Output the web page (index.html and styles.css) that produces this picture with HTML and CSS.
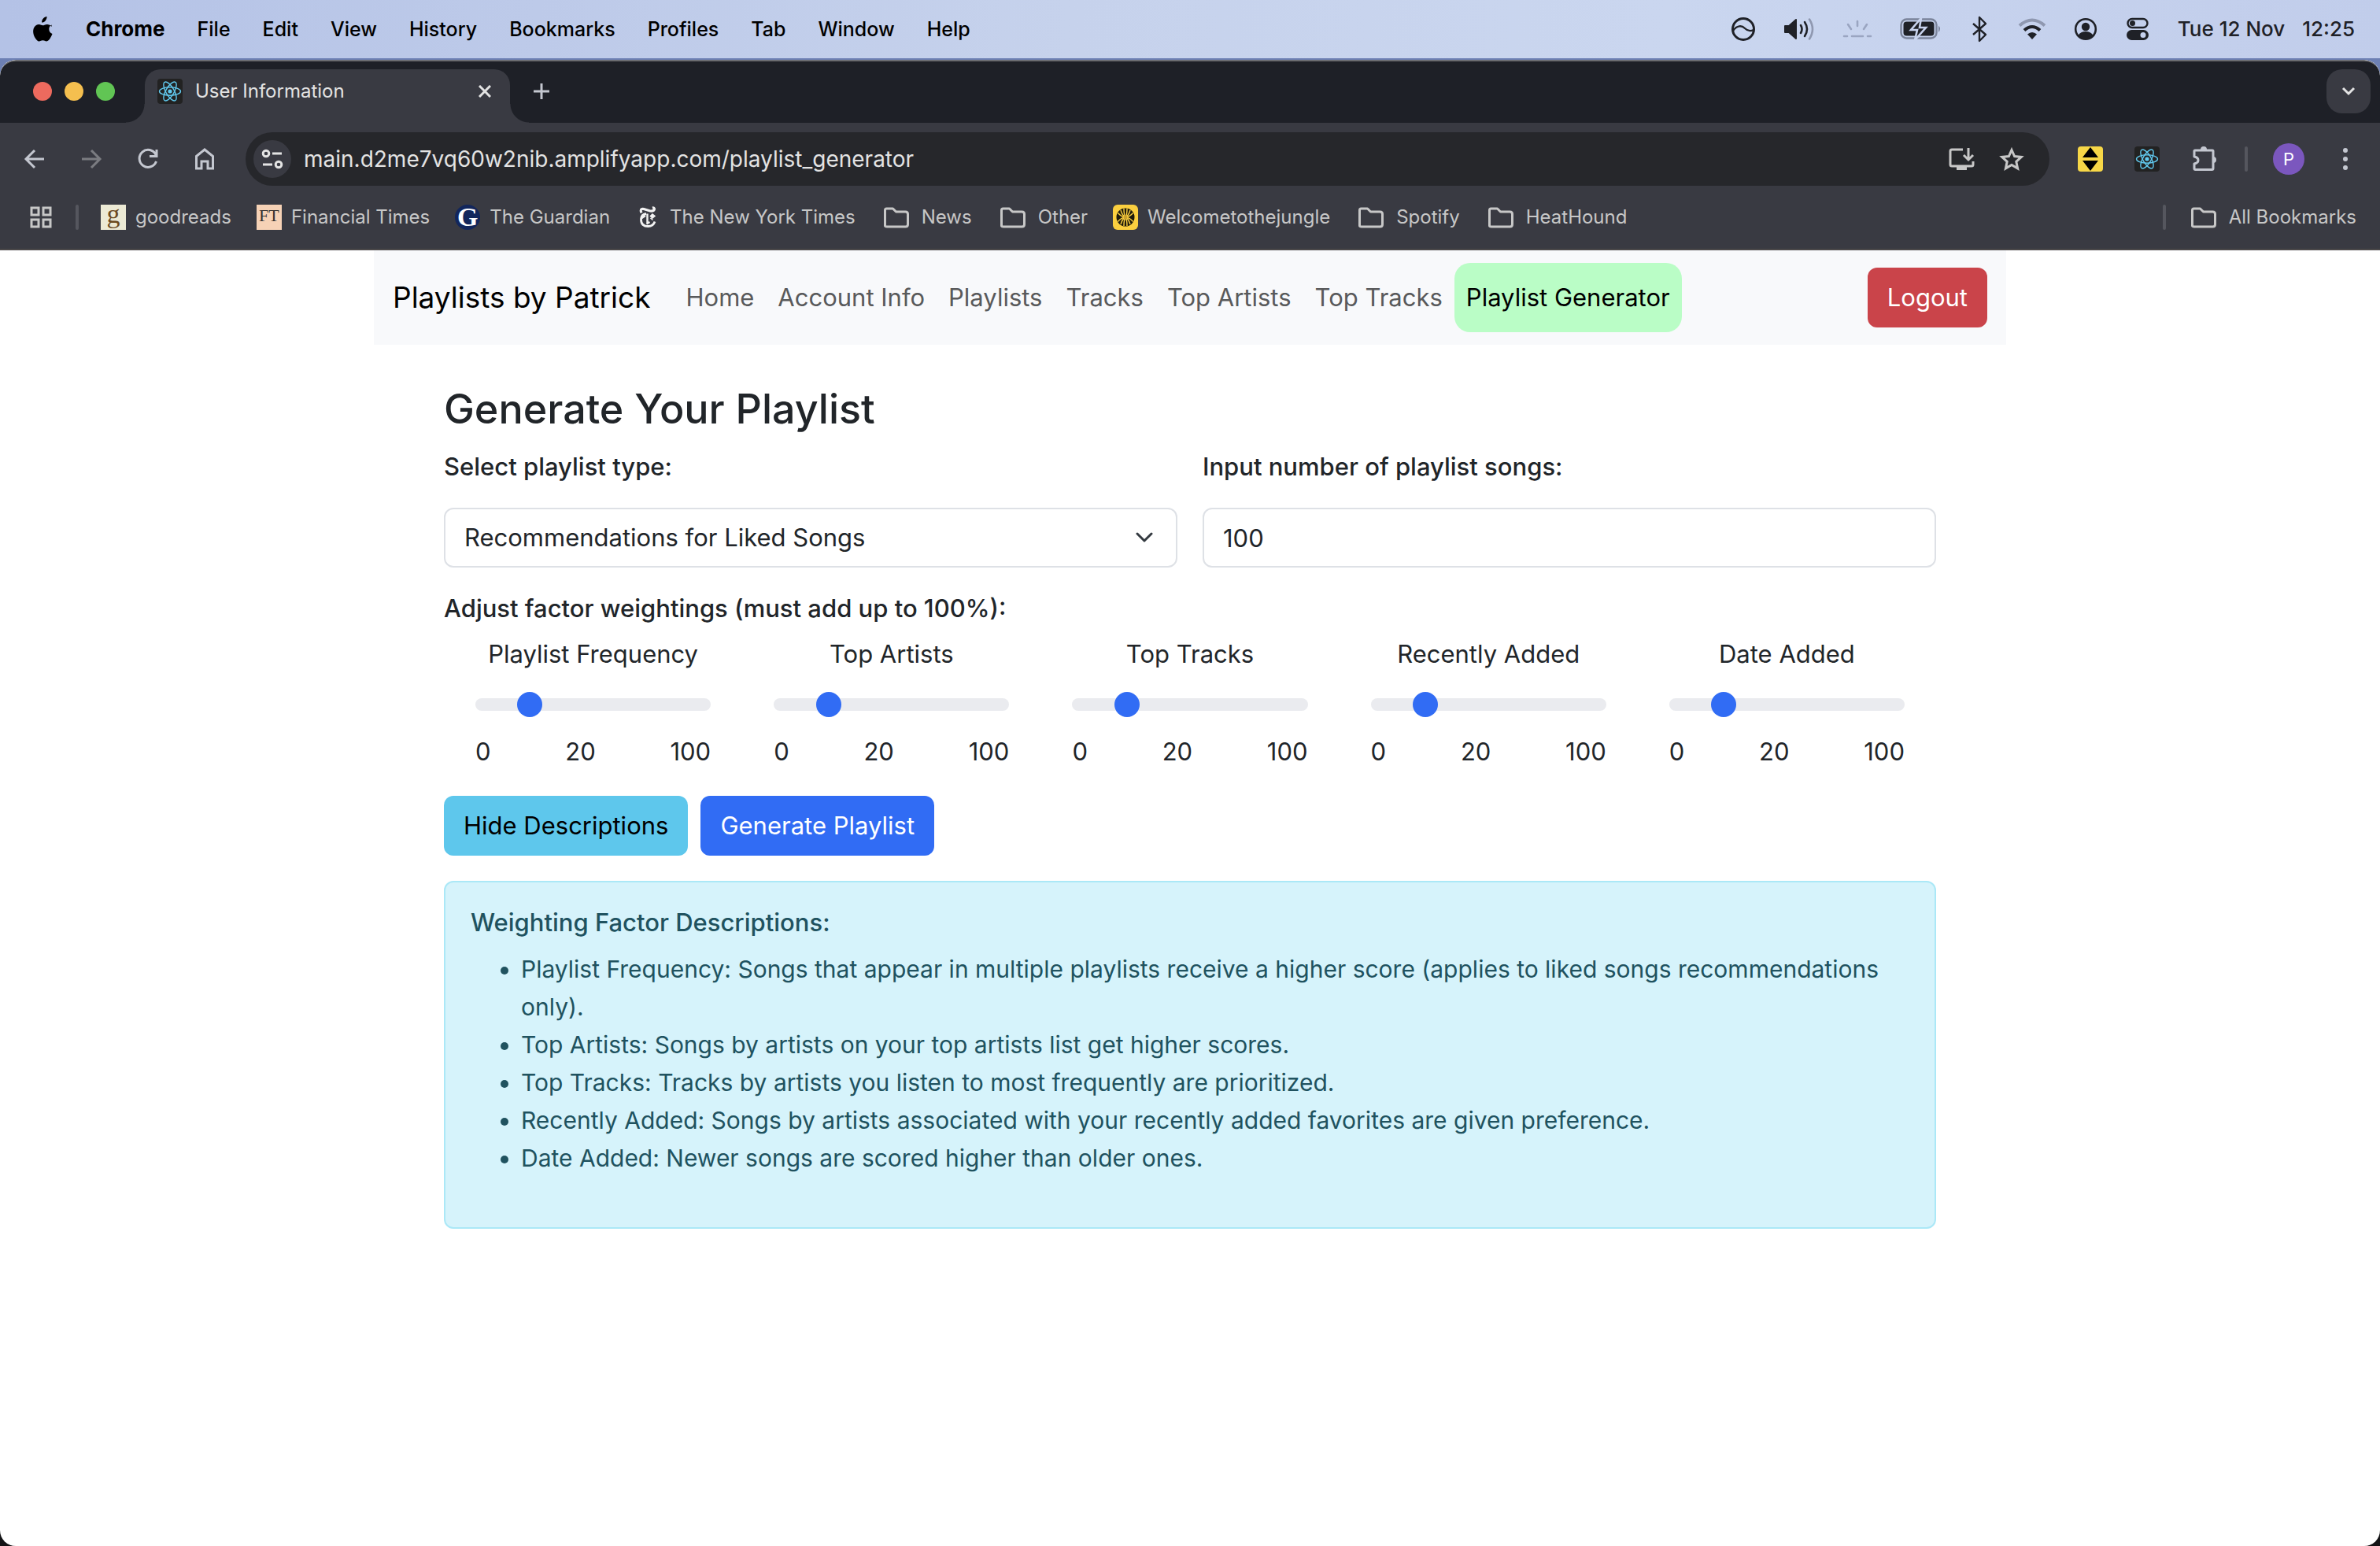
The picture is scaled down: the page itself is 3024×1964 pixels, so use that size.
FILE: index.html
```html
<!DOCTYPE html>
<html lang="en">
<head>
<meta charset="utf-8">
<title>User Information</title>
<link rel="stylesheet" href="styles.css">
</head>
<body>
<svg class="defs" width="0" height="0" aria-hidden="true">
  <symbol id="react" viewBox="0 0 32 32">
    <rect width="32" height="32" rx="4" fill="#222"/>
    <g fill="none" stroke="#61c9ee" stroke-width="1.4">
      <ellipse cx="16" cy="16" rx="13.5" ry="5.2"/>
      <ellipse cx="16" cy="16" rx="13.5" ry="5.2" transform="rotate(60 16 16)"/>
      <ellipse cx="16" cy="16" rx="13.5" ry="5.2" transform="rotate(120 16 16)"/>
    </g>
    <circle cx="16" cy="16" r="2.6" fill="#61c9ee"/>
  </symbol>
  <symbol id="folder" viewBox="0 0 40 32">
    <path d="M5.500 27V7q0-2 2-2h8l4 4h12q3 0 3 3v13q0 3-3 3H8q-2.500 0-2.500-2z" fill="none" stroke="#c7c7c7" stroke-width="3" stroke-linejoin="round"/>
  </symbol>
</svg>

<header class="menubar">
  <nav class="menus" aria-label="Menu bar">
    <button class="apple" aria-label="Apple menu">
      <svg width="28" height="34" viewBox="0 0 28 34"><path fill="#000" d="M19.500 1c.2 2-.6 3.900-1.700 5.200-1.200 1.400-3 2.400-4.700 2.300-.2-1.900.7-3.900 1.800-5.100C16.100 2 18 1.100 19.500 1zM25.600 11.600c-2.100 1.300-3.300 3.100-3.300 5.500 0 2.800 1.600 5 4.200 6-.7 2.200-1.700 4.100-3 5.900-1.200 1.700-2.400 3.400-4.400 3.400-1.900 0-2.500-1.100-4.700-1.100-2.200 0-2.900 1.100-4.700 1.200-1.900.1-3.300-1.800-4.500-3.500C2.700 25.500.8 19.300 3.400 14.700c1.300-2.300 3.600-3.700 6.100-3.700 1.900 0 3.700 1.300 4.900 1.300 1.100 0 3.300-1.600 5.700-1.400 1 .1 3.700.4 5.500 3z"/></svg>
    </button>
    <button class="app">Chrome</button>
    <button>File</button>
    <button>Edit</button>
    <button>View</button>
    <button>History</button>
    <button>Bookmarks</button>
    <button>Profiles</button>
    <button>Tab</button>
    <button>Window</button>
    <button>Help</button>
  </nav>
  <div class="status">
    <svg width="32" height="32" viewBox="0 0 32 32" fill="none" stroke="#1f2127" stroke-width="3"><circle cx="16" cy="16" r="13.500"/><path d="M3 18c5-7 11-7 15-3s7 4 11 2" stroke-width="2.400"/></svg>
    <svg width="40" height="30" viewBox="0 0 40 30" fill="none" stroke="#1f2127" stroke-width="2.600" stroke-linecap="round"><path d="M2 11h5l9-8v24l-9-8H2z" fill="#1f2127" stroke-linejoin="round" stroke-width="2"/><path d="M22 10q3 5 0 10M27 6q6 9 0 18"/><path d="M33 2.500q8 12.500 0 25" stroke="#8f98b0"/></svg>
    <svg width="38" height="24" viewBox="0 0 38 24" fill="none" stroke="#9aa5c1" stroke-width="2.600" stroke-linecap="round"><path d="M19 2v6M7 6l4 6M31 6l-4 6M2 21h4M12 21h14M32 21h4"/></svg>
    <svg width="52" height="28" viewBox="0 0 52 28"><rect x="1.500" y="1.500" width="45" height="24" rx="7" fill="none" stroke="#7b849b" stroke-width="2.400"/><path d="M49 9.500q4 4 0 8.500z" fill="#7b849b"/><rect x="4.500" y="4.500" width="39" height="18" rx="4" fill="#1f2127"/><path d="M27 0L14 15h8l-3 13 14-16h-8z" fill="#1f2127" stroke="#c8d3ed" stroke-width="2.600"/></svg>
    <svg width="28" height="34" viewBox="-4 0 28 34" fill="none" stroke="#1f2127" stroke-width="2.400" stroke-linejoin="round"><path d="M2 10l16 14-8 8V2l8 8L2 24"/></svg>
    <svg width="36" height="28" viewBox="0 0 36 28" fill="none" stroke-width="4"><path d="M2 9.500q16-14 32 0" stroke="#8f98b0"/><path d="M8 15.500q10-9 20 0" stroke="#1f2127"/><path d="M18 27l-6-6.500q6-5 12 0z" fill="#1f2127"/></svg>
    <svg width="30" height="30" viewBox="0 0 30 30"><circle cx="15" cy="15" r="12.800" fill="none" stroke="#1f2127" stroke-width="2.600"/><circle cx="15" cy="12" r="5.200" fill="#1f2127"/><path d="M5.500 23q3-5 9.500-5t9.500 5q-3.500 5-9.500 5t-9.500-5z" fill="#1f2127"/></svg>
    <svg width="32" height="30" viewBox="-2 0 32 30"><rect x="1.500" y="2" width="25" height="11" rx="5.500" fill="none" stroke="#1f2127" stroke-width="2.400"/><circle cx="7.500" cy="7.500" r="3.500" fill="#1f2127"/><rect y="16" width="28" height="13" rx="6.500" fill="#1f2127"/><circle cx="21" cy="22.500" r="3.500" fill="#c6d1ed"/></svg>
    <time class="clock" datetime="2024-11-12T12:25"><span>Tue 12 Nov</span><span>12:25</span></time>
  </div>
</header>

<div class="window">
  <div class="tabstrip">
    <div class="lights">
      <button class="light close" aria-label="Close window"></button>
      <button class="light minimise" aria-label="Minimise window"></button>
      <button class="light zoom" aria-label="Zoom window"></button>
    </div>
    <div class="tab">
      <svg width="32" height="32"><use href="#react"/></svg>
      <span class="tab-title">User Information</span>
      <button class="icon-button" aria-label="Close tab"><svg width="16" height="16" viewBox="0 0 16 16" stroke="#e3e3e3" stroke-width="3"><path d="M1 1l14 14M15 1L1 15"/></svg></button>
    </div>
    <button class="icon-button new-tab" aria-label="New tab"><svg width="20" height="20" viewBox="0 0 20 20" stroke="#c4c7d0" stroke-width="3"><path d="M10 0v20M0 10h20"/></svg></button>
    <button class="tab-search" aria-label="Search tabs"><svg width="18" height="12" viewBox="0 0 18 12" fill="none" stroke="#e3e3e3" stroke-width="3"><path d="M2 2l7 7 7-7"/></svg></button>
  </div>

  <div class="toolbar">
    <div class="nav-buttons">
      <button class="icon-button" aria-label="Back"><svg width="28" height="28" viewBox="0 0 28 28" fill="none" stroke="#c4c7d0" stroke-width="3"><path d="M14 3L3 14l11 11M3 14h23"/></svg></button>
      <button class="icon-button" aria-label="Forward"><svg width="28" height="28" viewBox="0 0 28 28" fill="none" stroke="#7b7c81" stroke-width="3"><path d="M14 3l11 11-11 11M25 14H2"/></svg></button>
      <button class="icon-button" aria-label="Reload"><svg width="28" height="28" viewBox="0 0 28 28" fill="none" stroke="#c4c7d0" stroke-width="3"><path d="M24.500 17A11 11 0 1 1 24 8.500M25 2v8.500h-9"/></svg></button>
      <button class="icon-button" aria-label="Home"><svg width="28" height="30" viewBox="0 0 28 30" fill="none" stroke="#c4c7d0" stroke-width="3"><path d="M3.500 11.500L14 3l10.500 8.500V27H18v-9h-8v9H3.500z"/></svg></button>
    </div>
    <div class="omnibox">
      <button class="site-info" aria-label="View site information"><svg width="28" height="26" viewBox="0 0 28 26" fill="none" stroke="#e3e3e3" stroke-width="3"><circle cx="6" cy="6" r="3.800"/><path d="M14 6h12M2 20h12"/><circle cx="22" cy="20" r="3.800"/></svg></button>
      <input class="url" type="text" aria-label="Address and search bar" value="main.d2me7vq60w2nib.amplifyapp.com/playlist_generator">
      <button class="icon-button" aria-label="Install app"><svg width="34" height="32" viewBox="0 0 34 32" fill="none" stroke="#c7c7c7" stroke-width="3"><path d="M19 4H5q-2 0-2 2v17q0 2 2 2h25q2 0 2-2v-4M26 2v14M20 11l6 6 6-6"/><path d="M12 25h11v4H12z" fill="#c7c7c7" stroke-width="2"/></svg></button>
      <button class="icon-button" aria-label="Bookmark this tab"><svg width="32" height="32" viewBox="0 0 32 32" fill="none" stroke="#c7c7c7" stroke-width="3"><path d="M16 4.500l3.600 8 8.700.9-6.500 5.900 1.800 8.600-7.600-4.400-7.600 4.400 1.800-8.600-6.500-5.900 8.700-.9z"/></svg></button>
    </div>
    <div class="extensions">
      <button class="icon-button" aria-label="Arrow extension"><svg width="32" height="32" viewBox="0 0 32 32"><rect width="32" height="32" rx="4" fill="#f7d747"/><path d="M16 1l10 13H6zM16 31l10-13H6z" fill="#000"/></svg></button>
      <button class="icon-button" aria-label="React Developer Tools"><svg width="32" height="32"><use href="#react"/></svg></button>
      <button class="icon-button" aria-label="Extensions"><svg width="34" height="34" viewBox="0 0 34 34"><path d="M5 7q0-1 1-1h22q1 0 1 1v22q0 1.500-1.500 1.500h-21Q5 30.500 5 29v-6q5-1 5-4.500T5 14z" fill="none" stroke="#c4c7d0" stroke-width="3" stroke-linejoin="round"/><path d="M13 5q0-4 4-4t4 4zM29 14q4 0 4 4t-4 4z" fill="#c4c7d0"/></svg></button>
    </div>
    <span class="divider"></span>
    <button class="avatar" aria-label="Profile">P</button>
    <button class="icon-button" aria-label="Chrome menu"><svg width="8" height="30" viewBox="0 0 8 30" fill="#c4c7d0"><circle cx="4" cy="4" r="3"/><circle cx="4" cy="15" r="3"/><circle cx="4" cy="26" r="3"/></svg></button>
  </div>

  <nav class="bookmarks" aria-label="Bookmarks">
    <button class="icon-button apps" aria-label="Apps"><svg width="28" height="28" viewBox="0 0 28 28" fill="none" stroke="#c7c7c7" stroke-width="3"><path d="M2 2h9v9H2zM17 2h9v9h-9zM2 17h9v9H2zM17 17h9v9h-9z"/></svg></button>
    <span class="divider"></span>
    <a href="#"><span class="favicon goodreads" aria-hidden="true">g</span>goodreads</a>
    <a href="#"><span class="favicon ft" aria-hidden="true">FT</span>Financial Times</a>
    <a href="#"><span class="favicon guardian" aria-hidden="true">G</span>The Guardian</a>
    <a href="#"><svg width="32" height="32" viewBox="0 0 32 32" fill="none" stroke="#f2f2f2"><path d="M8 10.500Q5.500 4.500 11 5.500l8 2.500q5 .5 5.500-2.500-.5-2-2.500-1.500" stroke-width="3.200"/><path d="M14 11.500q-6.500 1-6.500 7.500 0 8.500 9 8.500 6.500 0 8.500-6" stroke-width="2.800"/><path d="M15.500 11.500v13M14.500 24.500l4-2.500M7 18l6-4" stroke-width="2.400"/><path d="M22 12l3 2.500-3 2.500-2.500-2.500zM19.500 17l3 2.500" stroke-width="1.600" fill="#f2f2f2"/></svg>The New York Times</a>
    <a href="#"><svg width="40" height="32"><use href="#folder"/></svg>News</a>
    <a href="#"><svg width="40" height="32"><use href="#folder"/></svg>Other</a>
    <a href="#"><svg width="32" height="32" viewBox="0 0 32 32"><rect width="32" height="32" rx="6" fill="#fbcf3f"/><circle cx="16" cy="16" r="11.500" fill="#1d1a0c"/><g fill="none" stroke="#fbcf3f" stroke-width="1.400"><path d="M14 5q0 8 2 11 2-3 2-11M10 7q2 7 6 9 4-2 6-9M6.500 10.500q4 5 9.500 5.500 5.500-.5 9.500-5.500M14 27q0-8 2-11 2 3 2 11M10 25q2-7 6-9 4 2 6 9M6.500 21.500q4-5 9.500-5.500 5.500.5 9.500 5.500"/></g><circle cx="16" cy="16" r="2.500" fill="#c9a02c"/></svg>Welcometothejungle</a>
    <a href="#"><svg width="40" height="32"><use href="#folder"/></svg>Spotify</a>
    <a href="#"><svg width="40" height="32"><use href="#folder"/></svg>HeatHound</a>
    <span class="divider end"></span>
    <a href="#"><svg width="40" height="32"><use href="#folder"/></svg>All Bookmarks</a>
  </nav>

  <div class="page">
    <nav class="navbar" aria-label="Site">
      <a class="brand" href="#">Playlists by Patrick</a>
      <div class="links">
        <a href="#">Home</a>
        <a href="#">Account Info</a>
        <a href="#">Playlists</a>
        <a href="#">Tracks</a>
        <a href="#">Top Artists</a>
        <a href="#">Top Tracks</a>
        <a class="active" href="#" aria-current="page">Playlist Generator</a>
      </div>
      <button class="btn danger">Logout</button>
    </nav>

    <main>
      <h2>Generate Your Playlist</h2>
      <form>
        <div class="fields">
          <div class="field">
            <label for="type">Select playlist type:</label>
            <select id="type" class="control"><option>Recommendations for Liked Songs</option></select>
          </div>
          <div class="field">
            <label for="count">Input number of playlist songs:</label>
            <input id="count" class="control" type="text" inputmode="numeric" value="100">
          </div>
        </div>

        <fieldset>
          <legend>Adjust factor weightings (must add up to 100%):</legend>
          <div class="factors">
            <div class="factor">
              <label for="frequency">Playlist Frequency</label>
              <input id="frequency" type="range" min="0" max="100" value="20">
              <div class="scale"><span>0</span><span>20</span><span>100</span></div>
            </div>
            <div class="factor">
              <label for="artists">Top Artists</label>
              <input id="artists" type="range" min="0" max="100" value="20">
              <div class="scale"><span>0</span><span>20</span><span>100</span></div>
            </div>
            <div class="factor">
              <label for="tracks">Top Tracks</label>
              <input id="tracks" type="range" min="0" max="100" value="20">
              <div class="scale"><span>0</span><span>20</span><span>100</span></div>
            </div>
            <div class="factor">
              <label for="recent">Recently Added</label>
              <input id="recent" type="range" min="0" max="100" value="20">
              <div class="scale"><span>0</span><span>20</span><span>100</span></div>
            </div>
            <div class="factor">
              <label for="date">Date Added</label>
              <input id="date" type="range" min="0" max="100" value="20">
              <div class="scale"><span>0</span><span>20</span><span>100</span></div>
            </div>
          </div>
        </fieldset>

        <div class="actions">
          <button class="btn info" type="button">Hide Descriptions</button>
          <button class="btn primary" type="button">Generate Playlist</button>
        </div>
      </form>

      <section class="alert">
        <h5>Weighting Factor Descriptions:</h5>
        <ul>
          <li>Playlist Frequency: Songs that appear in multiple playlists receive a higher score (applies to liked songs recommendations only).</li>
          <li>Top Artists: Songs by artists on your top artists list get higher scores.</li>
          <li>Top Tracks: Tracks by artists you listen to most frequently are prioritized.</li>
          <li>Recently Added: Songs by artists associated with your recently added favorites are given preference.</li>
          <li>Date Added: Newer songs are scored higher than older ones.</li>
        </ul>
      </section>
    </main>
  </div>
</div>
</body>
</html>
```

FILE: styles.css
```css
* { box-sizing: border-box; }

body {
  margin: 0;
  min-height: 100vh;
  display: flex;
  flex-direction: column;
  background: linear-gradient(#6d80b4 0, #6d80b4 120px, #141416 200px);
  font-family: Inter, "Liberation Sans", sans-serif;
  font-size: 31px;
  line-height: 48px;
  color: #212529;
}

button, input, select { font: inherit; color: inherit; }
button { border: 0; padding: 0; background: none; }
a { color: inherit; text-decoration: none; }
svg { display: block; flex: none; }
.defs { position: absolute; }

/* macOS menu bar */
.menubar {
  height: 74px;
  padding: 0 32px 0 40px;
  display: flex;
  align-items: center;
  justify-content: space-between;
  background: linear-gradient(90deg, #b4c2e6, #c6d2ec 45%, #cad6ef 70%, #c1cdeb);
  color: #000;
  font-size: 25px;
  line-height: 32px;
  font-weight: 500;
}
.menus { display: flex; align-items: center; gap: 41px; }
.menus .app { font-size: 26px; font-weight: 700; }
.status { display: flex; align-items: center; gap: 35px; }
.clock { display: flex; gap: 22px; color: #1f2127; font-size: 26px; }

/* Browser window */
.window {
  flex: 1;
  display: flex;
  flex-direction: column;
  margin-top: 2px;
  border-radius: 20px;
  overflow: hidden;
  background: #fff;
}
.icon-button {
  width: 40px;
  height: 40px;
  display: flex;
  align-items: center;
  justify-content: center;
}
.tabstrip {
  height: 80px;
  padding: 10px 12px 0 42px;
  display: flex;
  background: #1e2027;
  border-top: 2px solid #6b6c70;
  border-radius: 20px 20px 0 0;
}
.lights { display: flex; gap: 16px; padding-top: 16px; margin-right: 38px; }
.light { width: 24px; height: 24px; border-radius: 50%; }
.close { background: #ed6a5e; }
.minimise { background: #f5bf4f; }
.zoom { background: #61c554; }
.tab {
  position: relative;
  width: 464px;
  height: 68px;
  padding: 8px 12px 0 16px;
  display: flex;
  align-items: flex-start;
  background: #393a42;
  border-radius: 20px 20px 0 0;
  color: #e3e3e3;
  font-size: 24px;
  line-height: 40px;
}
.tab > svg { margin: 4px 16px 0 0; }
.tab-title { flex: 1; }
.tab::before, .tab::after {
  content: "";
  position: absolute;
  bottom: 0;
  width: 24px;
  height: 24px;
}
.tab::before { left: -24px; background: radial-gradient(circle at 0 0, transparent 23px, #393a42 24px); }
.tab::after { right: -24px; background: radial-gradient(circle at 100% 0, transparent 23px, #393a42 24px); }
.new-tab { margin: 8px 0 0 20px; }
.tab-search {
  width: 56px;
  height: 56px;
  margin-left: auto;
  display: flex;
  align-items: center;
  justify-content: center;
  background: #393a42;
  border-radius: 20px;
}
.toolbar {
  height: 92px;
  padding: 0 24px;
  display: flex;
  align-items: center;
  background: #393a42;
}
.nav-buttons { display: flex; gap: 32px; margin-right: 32px; }
.omnibox {
  flex: 1;
  height: 68px;
  padding: 0 28px 0 10px;
  display: flex;
  align-items: center;
  gap: 24px;
  background: #26272b;
  border-radius: 34px;
}
.site-info {
  width: 48px;
  height: 48px;
  display: flex;
  align-items: center;
  justify-content: center;
  background: #393a42;
  border-radius: 50%;
}
.url {
  flex: 1;
  min-width: 0;
  height: 48px;
  margin-left: -8px;
  padding: 0;
  border: 0;
  outline: 0;
  background: none;
  color: #e3e3e3;
  font-size: 28px;
}
.extensions { display: flex; gap: 32px; margin: 0 32px; }
.divider { width: 4px; height: 32px; border-radius: 2px; background: #55565e; }
.avatar {
  width: 40px;
  height: 40px;
  margin: 0 32px;
  border-radius: 50%;
  background: #7b57be;
  color: #fff;
  font-size: 22px;
  line-height: 40px;
}
.bookmarks {
  height: 70px;
  padding: 0 30px 12px 32px;
  display: flex;
  align-items: center;
  gap: 32px;
  background: #393a42;
  border-bottom: 2px solid #4b4849;
  color: #c7c7c7;
  font-size: 24px;
  line-height: 32px;
}
.bookmarks a { display: flex; align-items: center; gap: 12px; white-space: nowrap; }
.bookmarks .divider { margin-right: -4px; }
.apps { margin-right: -8px; }
.end { margin-left: auto; }
.favicon { width: 32px; height: 32px; text-align: center; font-family: "Liberation Serif", serif; }
.goodreads { background: #ece9d4; color: #6b4a1f; font-size: 34px; line-height: 24px; }
.ft { background: #f6d2b6; color: #33302e; font-size: 22px; line-height: 28px; }
.guardian { background: #12265c; color: #fff; border-radius: 50%; font-size: 34px; font-weight: 700; }

/* Playlist site */
.navbar {
  max-width: 2074px;
  margin: 0 auto;
  padding: 16px 24px;
  display: flex;
  align-items: center;
  background: #f8f9fb;
}
.brand { margin-right: 30px; color: #000; font-size: 37px; line-height: 60px; }
.links { flex: 1; display: flex; color: #595a5b; }
.links a { padding: 20px 15px; }
.links .active { background: #bafdc6; border-radius: 20px; color: #000; }
.btn { padding: 14px 25px; border-radius: 12px; }
.danger { background: #ca444a; color: #fff; }
.info { background: #5ec7ec; color: #000; }
.primary { background: #316cf4; color: #fff; }

main { max-width: 1896px; margin: 48px auto 0; }
h2 { margin: 0 0 15px; font-size: 52px; line-height: 68px; font-weight: 500; }
.fields { display: grid; grid-template-columns: 1fr 1fr; gap: 32px; }
.field label { display: block; margin-bottom: 28px; font-weight: 500; }
.control {
  display: block;
  width: 100%;
  height: 76px;
  padding: 0 24px;
  border: 2px solid #dee1e6;
  border-radius: 12px;
  background: #fff;
}
select.control {
  appearance: none;
  background: #fff url("data:image/svg+xml,%3Csvg xmlns='http://www.w3.org/2000/svg' width='24' height='14' fill='none' stroke='%23343a40' stroke-width='3' stroke-linecap='round' stroke-linejoin='round'%3E%3Cpath d='M3 2l9 9 9-9'/%3E%3C/svg%3E") no-repeat right 28px center;
}
fieldset { margin: 28px 0 0; padding: 0; border: 0; min-width: 0; }
legend { padding: 0; font-weight: 500; }
.factors { display: grid; grid-template-columns: repeat(5, 1fr); margin-top: 10px; }
.factor { padding: 0 40px; text-align: center; }
.factor label { display: block; margin-bottom: 16px; }
.factor input {
  appearance: none;
  display: block;
  width: 100%;
  height: 48px;
  margin: 0 0 12px;
  background: none;
}
.factor input::-webkit-slider-runnable-track { height: 16px; border-radius: 8px; background: #eaebef; }
.factor input::-webkit-slider-thumb {
  appearance: none;
  width: 32px;
  height: 32px;
  margin-top: -8px;
  border-radius: 50%;
  background: #316cf4;
}
.scale { display: flex; justify-content: space-between; }
.actions { display: flex; gap: 16px; margin: 32px 0; }
.alert {
  padding: 32px;
  border: 2px solid #abe8f7;
  border-radius: 12px;
  background: #d6f3fb;
  color: #20525f;
}
h5 { margin: 0 0 16px; font-size: inherit; line-height: 38px; font-weight: 500; }
ul { margin: 0 0 32px; padding-left: 64px; font-size: 30px; }
```
